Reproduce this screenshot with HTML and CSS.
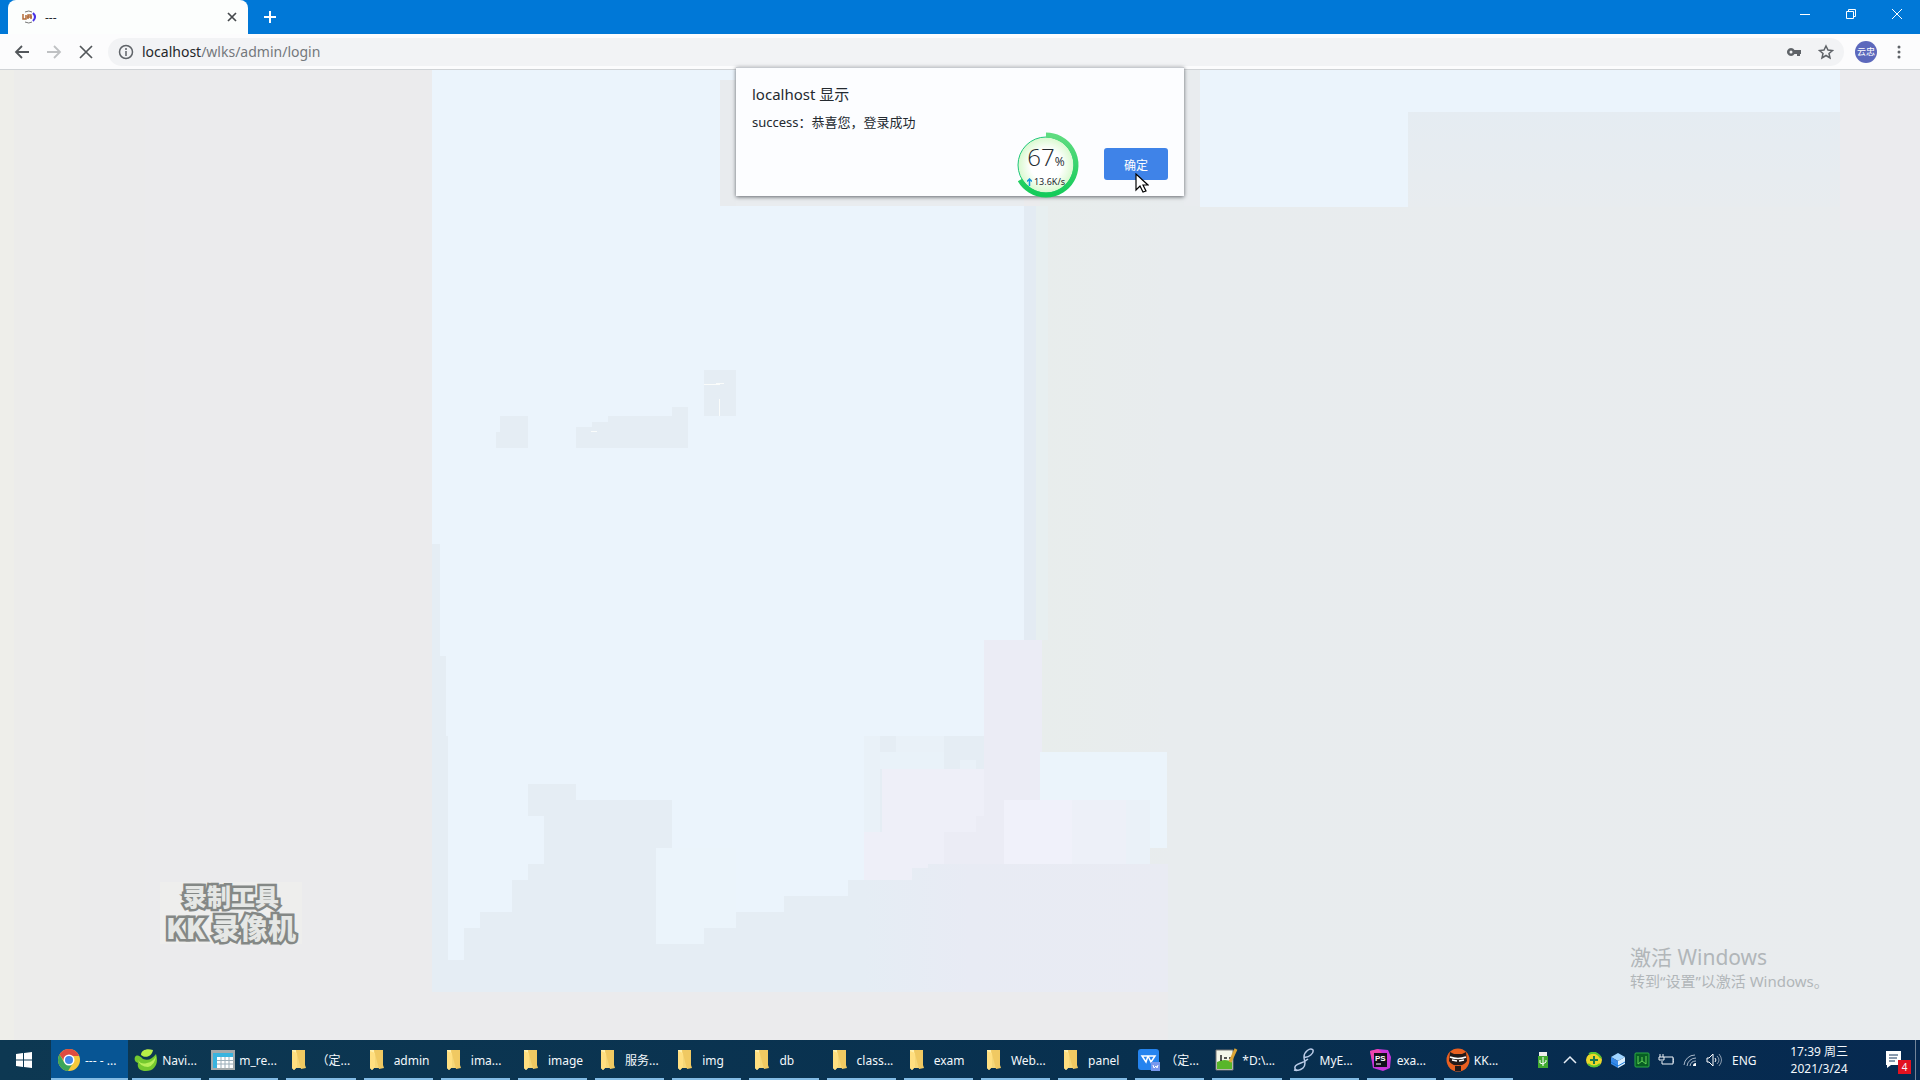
FILE: index.html
```html
<!DOCTYPE html>
<html lang="zh-CN">
<head>
<meta charset="utf-8">
<title>---</title>
<link rel="stylesheet" href="styles.css">
</head>
<body>
<svg class="defs" aria-hidden="true">
  <symbol id="folder" viewBox="0 0 24 24"><path fill="#f5d778" d="M4 2h10v3h1v12l2 2v1H7z"/><path fill="#fff0ad" d="M4 2h4v18l-2 2-2-2z"/><path fill="#f0c962" d="M8 2h9v15l1 3-5 1z"/><path fill="#ffdf80" d="M4 3l5 2v14l-3 3-2-2z"/></symbol>
</svg>
<div class="desktop">
  <header class="tabs">
    <div class="tab">
      <svg width="16" height="16" viewBox="0 0 16 16"><path d="M4 3q4-2 7 0M4 13q4 2 7 0" fill="none" stroke="#777"/><path d="M2 5v5h3V6m2 4V6h3v4M6 8h5" fill="none" stroke="#b36b38" stroke-width="1.500"/><path d="M12 4q4 4 0 8" fill="none" stroke="#4932e5" stroke-width="2"/></svg>
      <span class="tab-title">---</span>
      <button class="plain" aria-label="关闭标签页"><svg width="10" height="10" viewBox="0 0 10 10"><path d="M1 1l8 8M9 1L1 9" stroke="#45494d" stroke-width="1.700"/></svg></button>
    </div>
    <button class="plain add" aria-label="新标签页"><svg width="14" height="14" viewBox="0 0 14 14"><path d="M7 1v12M1 7h12" stroke="#fff" stroke-width="2"/></svg></button>
    <div class="window-buttons">
      <button class="plain" aria-label="最小化"><svg width="12" height="12" viewBox="0 0 12 12"><path d="M1 6.500h10" stroke="#fff"/></svg></button>
      <button class="plain" aria-label="还原"><svg width="12" height="12" viewBox="0 0 12 12"><path d="M1.500 3.500h7v7h-7zM3.500 3V1.500h7v7H9" fill="none" stroke="#fff"/></svg></button>
      <button class="plain" aria-label="关闭"><svg width="12" height="12" viewBox="0 0 12 12"><path d="M1 1l10 10M11 1L1 11" stroke="#fff"/></svg></button>
    </div>
  </header>
  <nav class="toolbar">
    <button class="plain nav" aria-label="后退"><svg width="16" height="16" viewBox="0 0 16 16"><path d="M15 8H2M8 2L2 8l6 6" fill="none" stroke="#53575b" stroke-width="1.800"/></svg></button>
    <button class="plain nav" aria-label="前进"><svg width="16" height="16" viewBox="0 0 16 16"><path d="M1 8h13M8 2l6 6-6 6" fill="none" stroke="#bfc1c3" stroke-width="1.800"/></svg></button>
    <button class="plain nav" aria-label="停止"><svg width="14" height="14" viewBox="0 0 14 14"><path d="M1 1l12 12M13 1L1 13" stroke="#53575b" stroke-width="1.700"/></svg></button>
    <div class="address">
      <svg width="16" height="16" viewBox="0 0 16 16"><circle cx="8" cy="8" r="6.500" fill="none" stroke="#5f6368" stroke-width="1.500"/><path d="M8 7v5M8 4v2" stroke="#5f6368" stroke-width="1.500"/></svg>
      <a class="url" href="#"><span class="host">localhost</span>/wlks/admin/login</a>
      <button class="plain key" aria-label="密码"><svg width="16" height="16" viewBox="0 0 16 16"><path fill="#5f6368" fill-rule="evenodd" d="M5 4a4 4 0 1 0 3.500 6H11v2h3v-2h1V6H8.500A4 4 0 0 0 5 4zm0 2.500a1.500 1.500 0 1 1 0 3 1.500 1.500 0 0 1 0-3z"/></svg></button>
      <button class="plain" aria-label="收藏"><svg width="16" height="16" viewBox="0 0 16 16"><path d="M8 2l2 4 4.500.5L11 9.500l1 4.500-4-2.500L4 14l1-4.500L1.500 6.500 6 6z" fill="none" stroke="#5f6368" stroke-width="1.500"/></svg></button>
    </div>
    <button class="plain avatar">云忠</button>
    <button class="plain menu" aria-label="菜单"><svg width="4" height="16" viewBox="0 0 4 16" fill="#5f6368"><circle cx="2" cy="3" r="1.500"/><circle cx="2" cy="8" r="1.500"/><circle cx="2" cy="13" r="1.500"/></svg></button>
  </nav>
  <main class="page">
    <svg class="backdrop" viewBox="0 70 1920 970" preserveAspectRatio="none" shape-rendering="crispEdges" aria-hidden="true">
      <defs>
        <linearGradient id="right"><stop stop-color="#e8edec"/><stop offset=".15" stop-color="#e8ecee"/><stop offset="1" stop-color="#e9ecee"/></linearGradient>
        <linearGradient id="lilac"><stop stop-color="#e5edf4"/><stop offset=".35" stop-color="#e8ebf4"/><stop offset="1" stop-color="#e9ebf3"/></linearGradient>
        <linearGradient id="fade" x2="0" y2="1"><stop stop-color="#e5ecf2"/><stop offset="1" stop-color="#e8ecef"/></linearGradient>
      </defs>
      <path fill="#ebebed" d="M0 70h1920v970H0z"/><path fill="#ececeb" d="M0 70h145v970H0z"/><path fill="#ebebec" d="M80 70h65v970H80z"/><path fill="#eeeeea" d="M0 70h14v970H0z"/>
      <path fill="url(#right)" d="M1040 70h880v970H1168V864h-128z"/>
      <path fill="#e5edf4" d="M432 70h592v922H432z"/>
      <path fill="#ebf4fc" d="M432 70H1024V640H984V736H864V880H848V896H784V912H736V928H704V944H656V848H672V800H576V784H528V816H544V864H528V880H512V912H480V928H464V960H448V736H446V656H440V544H432z"/>
      <path fill="#ebf4fb" d="M656 848h80v80h-32v16h-48z"/>
      <path fill="#e5edf4" d="M500 416h28v32h-32v-16h4zM704 370h32v46h-32zM576 427h16v-5h16v-6h64v-9h16v41H576z"/>
      <path fill="#fafcfb" d="M704 384h16v1h-16zM716 383h8v1h-8zM719 399h1v17h-1zM591 431h6v1h-6z"/>
      <path fill="#e3ebf3" d="M1024 206h12v434h-12z"/><path fill="#e7eff0" d="M1036 206h12v434h-12z"/>
      <path fill="#e9f1f8" d="M864 736h16v144h-16zM896 736h48v33h-48zM960 760h16v9h-16z"/>
      <path fill="#e9f2f9" d="M880 752h64v17h-64z"/>
      <path fill="#eeeff8" d="M882 769h102v95H928v16h-64v-48h18z"/>
      <path fill="#ebecf5" d="M984 640h58v160h-50v64h-48v-32h32v-16h8z"/>
      <path fill="url(#lilac)" d="M864 880h48v-12h16v-4h240v128H864z"/>
      <path fill="#ebf4fb" d="M1040 752h127v96h-17v16h-142v-64h32z"/><path fill="#ebecf5" d="M992 800h16v64h-16z"/><path fill="#f0f1fa" d="M1004 800h68v64h-68z"/><path fill="#edf0f8" d="M1072 800h54v64h-54z"/><path fill="#eaf1f8" d="M1126 800h24v64h-24z"/>
      <path fill="#e8ebee" d="M720 80h16v126h-16z"/><path fill="#e9ecef" d="M736 196h288v10H736zM1184 80h16v126h-16z"/>
      <path fill="url(#fade)" d="M1408 112h432v95h-432z"/><path fill="#ebf4fc" d="M1200 70h640v42h-432v95h-208z"/><path fill="#ebebee" d="M1840 70h80v160h-80z"/>
    </svg>
    <div class="recorder-mark"><div class="mark-top">录制工具</div><div class="mark-bottom">KK 录像机</div></div>
    <aside class="activation"><div class="activation-title">激活 Windows</div><div>转到“设置”以激活 Windows。</div></aside>
    <section class="dialog" role="dialog" aria-labelledby="dialog-title">
      <h1 id="dialog-title">localhost 显示</h1>
      <p>success：恭喜您，登录成功</p>
      <button class="confirm">确定</button>
      <div class="meter">
        <svg width="66" height="66" viewBox="0 0 66 66" aria-hidden="true"><defs><radialGradient id="glow"><stop offset=".55" stop-color="#fff"/><stop offset="1" stop-color="#d8f9ce"/></radialGradient><linearGradient id="ring" x2="0" y2="1"><stop stop-color="#5fdc80"/><stop offset="1" stop-color="#13cb59"/></linearGradient></defs><circle cx="33" cy="33" r="28" fill="url(#glow)" stroke="#1fc77b"/><path d="M33 3a30 30 0 1 1-26 45" fill="none" stroke="url(#ring)" stroke-width="5"/></svg>
        <div class="meter-text"><div class="percent">67<small>%</small></div><div class="speed"><svg width="5" height="8" viewBox="0 0 5 8"><path d="M2.500 8V1M0 3.500L2.500 1 5 3.500" fill="none" stroke="#1594df" stroke-width="1.500"/></svg>13.6K/s</div></div>
      </div>
      <svg class="pointer" width="14" height="20" viewBox="0 0 14 20" aria-hidden="true"><path d="M1 1v16l4-4 3 6 3-1-3-6h5z" fill="#fff" stroke="#000" stroke-width="1.200"/></svg>
    </section>
  </main>
  <footer class="taskbar">
    <button class="plain start" aria-label="开始"><svg width="16" height="16" viewBox="0 0 16 16"><path fill="#fff" d="M0 2l7-1v6.500H0zM8 1l8-1v7.500H8zM0 8.500h7V15l-7-1zM8 8.500h8V16l-8-1z"/></svg></button>
    <div class="tasks">
      <button class="plain task active"><svg viewBox="0 0 24 24"><circle cx="12" cy="12" r="11" fill="#f5c83c"/><path fill="#df4b40" d="M2.500 6.500a11 11 0 0 1 19 0L22 8H12L8 14z"/><path fill="#3ca65b" d="M2.500 6.500A11 11 0 0 0 11 23l5-8-4 2-5-3z"/><circle cx="12" cy="12" r="5.500" fill="#fff"/><circle cx="12" cy="12" r="4" fill="#4285e8"/></svg><span>--- - ...</span></button>
      <button class="plain task"><svg viewBox="0 0 24 24"><path fill="#74c92f" d="M1 9c2-3 5-1 8 2 5 2 9 0 13-5 3 9-1 17-10 17-7 0-9-4-8-8-3-1-4-3-3-6z"/><path fill="#b6ef59" d="M4 12q3 5 9 3 6-1 9-7-1 9-8 11-8 0-10-7z"/><path fill="#b9ef47" d="M7 7c0-5 6-7 12-5-1 6-7 9-12 5z"/></svg><span>Navi...</span></button>
      <button class="plain task"><svg viewBox="0 0 24 24"><path fill="#a4aaac" d="M0 2h24v20H0z"/><path fill="#39b4df" d="M2 5h20v15H2z"/><path fill="#fff" d="M6 9h16v11H6z"/><path d="M6 12.500h16M6 16h16M10 9v11M14 9v11M18 9v11" stroke="#9baeb9"/></svg><span>m_re...</span></button>
      <button class="plain task"><svg><use href="#folder"/></svg><span>（定...</span></button>
      <button class="plain task"><svg><use href="#folder"/></svg><span>admin</span></button>
      <button class="plain task"><svg><use href="#folder"/></svg><span>ima...</span></button>
      <button class="plain task"><svg><use href="#folder"/></svg><span>image</span></button>
      <button class="plain task"><svg><use href="#folder"/></svg><span>服务...</span></button>
      <button class="plain task"><svg><use href="#folder"/></svg><span>img</span></button>
      <button class="plain task"><svg><use href="#folder"/></svg><span>db</span></button>
      <button class="plain task"><svg><use href="#folder"/></svg><span>class...</span></button>
      <button class="plain task"><svg><use href="#folder"/></svg><span>exam</span></button>
      <button class="plain task"><svg><use href="#folder"/></svg><span>Web...</span></button>
      <button class="plain task"><svg><use href="#folder"/></svg><span>panel</span></button>
      <button class="plain task"><svg viewBox="0 0 24 24"><rect x="1" y="1" width="21" height="21" rx="3" fill="#2584ef"/><path d="M5 8h6l-2 6zM9 8h9l-4 6-3-6" fill="none" stroke="#fff" stroke-width="1.500"/><path fill="#7897ed" d="M14 14h9v9h-9z"/><path d="M16 17l1 3 2-2 1 2 1-3" fill="none" stroke="#fff"/></svg><span>（定...</span></button>
      <button class="plain task"><svg viewBox="0 0 24 24"><path fill="#f3f6e9" stroke="#777" d="M2 2h17v20H2z"/><path fill="#58b62a" d="M3 14q8-4 15 0v7H3z"/><path d="M7 7v6M10 10h3m2 0h2" stroke="#222" stroke-width="1.500"/><path d="M22 1l-6 13" stroke="#dca535" stroke-width="3"/></svg><span>*D:\...</span></button>
      <button class="plain task"><svg viewBox="0 0 24 24"><path d="M12 9c5 1 10-4 9-7-3-3-9 2-9 7 0 4 3 7-1 11-3 3-9 3-8-1 1-4 8-3 13-8M11 20c-3 2-6 3-9 2" fill="none" stroke="#bacbe7" stroke-width="1.500"/></svg><span>MyE...</span></button>
      <button class="plain task"><svg viewBox="0 0 24 24"><path fill="#c735da" d="M1 3l8-2 10 1 3 7-1 11-7 3-10-3z"/><path fill="#ed45ad" d="M1 3l8-2 4 4-10 7z"/><path fill="#101019" d="M5 5h13v14H5z"/><text class="ps" x="6" y="13">PS</text><path d="M7 16h5" stroke="#fff"/></svg><span>exa...</span></button>
      <button class="plain task"><svg viewBox="0 0 24 24"><circle cx="12" cy="12" r="11.500" fill="#e96020"/><path fill="#241a1a" d="M4 4l4 2h8l4-2 1 9q-3 5-9 4-6 1-9-4zM9 18h6v5H9z"/><path d="M4 9q8 3 16 0M6 12l5 1m2 0l5-1" stroke="#fff" fill="none" stroke-width="1.500"/></svg><span>KK...</span></button>
    </div>
    <div class="tray">
      <svg width="16" height="16" viewBox="0 0 16 16"><path fill="#eee" d="M4 0h8v4H4z"/><path fill="#40a930" d="M3 4h10v12H3z"/><path d="M8 5v9M5 8v3l3 1 3-2V8" fill="none" stroke="#fff"/></svg>
      <svg width="16" height="16" viewBox="0 0 16 16"><path d="M2 11l6-6 6 6" fill="none" stroke="#e6edf5" stroke-width="1.500"/></svg>
      <svg width="16" height="16" viewBox="0 0 16 16"><ellipse cx="8" cy="8" rx="8" ry="7" fill="#ecd72a"/><path d="M3 2q7-4 12 4M2 12q6 5 12 0" stroke="#5ac52f" stroke-width="2" fill="none"/><path d="M8 4v8M4 8h8" stroke="#18794b" stroke-width="2"/></svg>
      <svg width="16" height="16" viewBox="0 0 16 16"><path fill="#9fd4ff" d="M1 5l7-4 7 4-7 4z"/><path fill="#398ae9" d="M1 5l7 4v7l-7-4z"/><path fill="#dbefff" d="M8 9l7-4v7l-7 4z"/><path d="M1 10l7 4 7-4" fill="none" stroke="#1677d7"/></svg>
      <svg width="16" height="16" viewBox="0 0 16 16"><rect x="1" y="1" width="14" height="14" rx="1" fill="#075e24" stroke="#2bac43"/><path d="M4 4v8l4-3 4 3V4M8 5v4" fill="none" stroke="#65d456"/></svg>
      <svg width="16" height="16" viewBox="0 0 16 16"><path d="M6 5h9v7H4V9M2 2v3M5 2v3M1 5h5v3H1zM15 7h1v3h-1" fill="none" stroke="#eef3f8"/></svg>
      <svg width="16" height="16" viewBox="0 0 16 16"><path d="M2 13A11 11 0 0 1 13 3M5 14a9 9 0 0 1 9-8M8 14a6 6 0 0 1 6-5" fill="none" stroke="#a9b8ca"/><path d="M11 14a3 3 0 0 1 3-3v3z" fill="#fff"/></svg>
      <svg width="16" height="16" viewBox="0 0 16 16"><path d="M1 6h2l4-4v12l-4-4H1zM9 6q2 2 0 4" fill="none" stroke="#fff"/><path d="M11 4q4 4 0 8M13 2q5 6 0 12" fill="none" stroke="#8b9bae"/></svg>
      <span class="language">ENG</span>
      <time class="clock">17:39 周三<br>2021/3/24</time>
      <button class="plain notices" aria-label="4 条通知"><svg width="24" height="22" viewBox="0 0 24 22"><path fill="#fff" d="M1 2h15v14H6l-4 3v-3H1z"/><path d="M4 6h9M4 9h8M4 12h6" stroke="#15365c"/></svg><span class="badge">4</span></button>
    </div>
  </footer>
</div>
</body>
</html>
```
FILE: styles.css
```css
* { box-sizing: border-box; }
body { margin: 0; font-family: "Noto Sans", "Noto Sans CJK SC", sans-serif; font-size: 12px; color: #242a30; }
.defs { display: none; }
.desktop { display: flex; flex-direction: column; height: 100vh; overflow: hidden; }
.plain { display: flex; align-items: center; justify-content: center; padding: 0; border: 0; background: none; color: inherit; font: inherit; }
.tabs { display: flex; flex: 0 0 34px; padding-left: 8px; background: #0078d7; }
.tab { display: flex; align-items: center; width: 240px; gap: 8px; padding: 0 11px 0 13px; border-radius: 8px 8px 0 0; background: #fcfefd; }
.tab-title { flex: 1; }
.add { width: 44px; }
.window-buttons { display: flex; margin-left: auto; padding-bottom: 6px; }
.window-buttons button { width: 46px; }
.toolbar { display: flex; align-items: center; flex: 0 0 36px; padding: 0 11px 0 6px; background: #fcfcfd; border-bottom: 1px solid #d0d3d6; }
.nav { width: 32px; height: 32px; }
.address { display: flex; flex: 1; align-items: center; gap: 8px; height: 28px; margin: 0 11px 0 6px; padding: 0 10px; border-radius: 14px; background: #f2f3f5; }
.url { flex: 1; color: #74787c; font-size: 14px; line-height: 18px; text-decoration: none; }
.host { color: #24272a; }
.key { margin-right: 8px; }
.avatar { width: 22px; height: 22px; border-radius: 50%; background: #5c68bc; color: #fff; font-size: 9px; }
.menu { width: 20px; margin-left: 12px; }
.page { position: relative; flex: 1; min-height: 0; }
.backdrop { display: block; width: 100%; height: 100%; }
.dialog { position: absolute; top: -3px; left: 50%; width: 448px; height: 129px; margin-left: -224px; padding: 13px 16px; background: #fcfdff; border-top: 1px solid #c8cbd0; box-shadow: 0 1px 4px #60646a; }
.dialog h1 { margin: 0; font-size: 15px; font-weight: 400; line-height: 26px; }
.dialog p { margin: 2px 0 0; font-size: 13px; line-height: 26px; }
.confirm { position: absolute; right: 16px; bottom: 16px; width: 64px; height: 32px; padding: 0; border: 0; border-radius: 3px; background: #3f83e8; color: #fff; font: 12px "Noto Sans CJK SC", sans-serif; }
.meter { position: absolute; right: 105px; bottom: -2px; width: 66px; height: 66px; }
.meter-text { position: absolute; inset: 11px 0 0; text-align: center; }
.percent { font: 300 24px/28px "Open Sans", sans-serif; }
.percent small { font-size: 12px; font-weight: 400; }
.speed { display: flex; align-items: center; justify-content: center; gap: 2px; font: 9px/12px "Noto Sans", sans-serif; }
.pointer { position: absolute; right: 35px; bottom: 3px; }
.recorder-mark { position: absolute; left: 160px; bottom: 96px; padding: 0 2px; background: #eeeeed; color: #e5e7e5; font-family: "Noto Sans CJK SC", sans-serif; font-weight: 900; text-align: center; -webkit-text-stroke: 5px #848886; paint-order: stroke fill; }
.mark-top { font-size: 24px; line-height: 28px; }
.mark-bottom { padding: 0 4px; font-size: 28px; line-height: 34px; }
.activation { position: absolute; right: 88px; bottom: 48px; width: 202px; color: #b1b6b9; font-size: 15px; line-height: 22px; white-space: nowrap; }
.activation-title { font-size: 21px; line-height: 26px; }
.taskbar { display: flex; flex: 0 0 40px; background: linear-gradient(90deg, #0d3852, #08304f 60%, #062950); color: #f3f8fc; }
.start { flex: 0 0 48px; }
.tasks { display: grid; grid-template-columns: repeat(19, minmax(0, 1fr)); flex: 0 1 1466px; margin-left: 3px; }
.task { position: relative; justify-content: flex-start; gap: 4px; padding-left: 6px; white-space: nowrap; overflow: hidden; }
.task svg { flex: 0 0 24px; height: 24px; }
.task::after { content: ""; position: absolute; right: 4px; bottom: 0; left: 4px; height: 2px; background: #83bce5; }
.active { background: #075594; }
.active::after { right: 0; left: 0; }
.ps { fill: #fff; font: 700 8px "Liberation Sans", sans-serif; }
.tray { display: flex; flex: 1; align-items: center; gap: 8px; padding: 0 4px 0 18px; }
.tray > svg { flex: 0 0 16px; }
.tray > svg:first-child { margin-right: 3px; }
.language { margin-left: 2px; }
.clock { margin-left: auto; text-align: center; line-height: 17px; white-space: nowrap; }
.notices { position: relative; width: 38px; height: 40px; margin-left: 22px; border-right: 1px solid #728499; }
.badge { position: absolute; right: 4px; bottom: 6px; width: 13px; height: 14px; background: #e21220; font-size: 10px; line-height: 14px; text-align: center; }
```
